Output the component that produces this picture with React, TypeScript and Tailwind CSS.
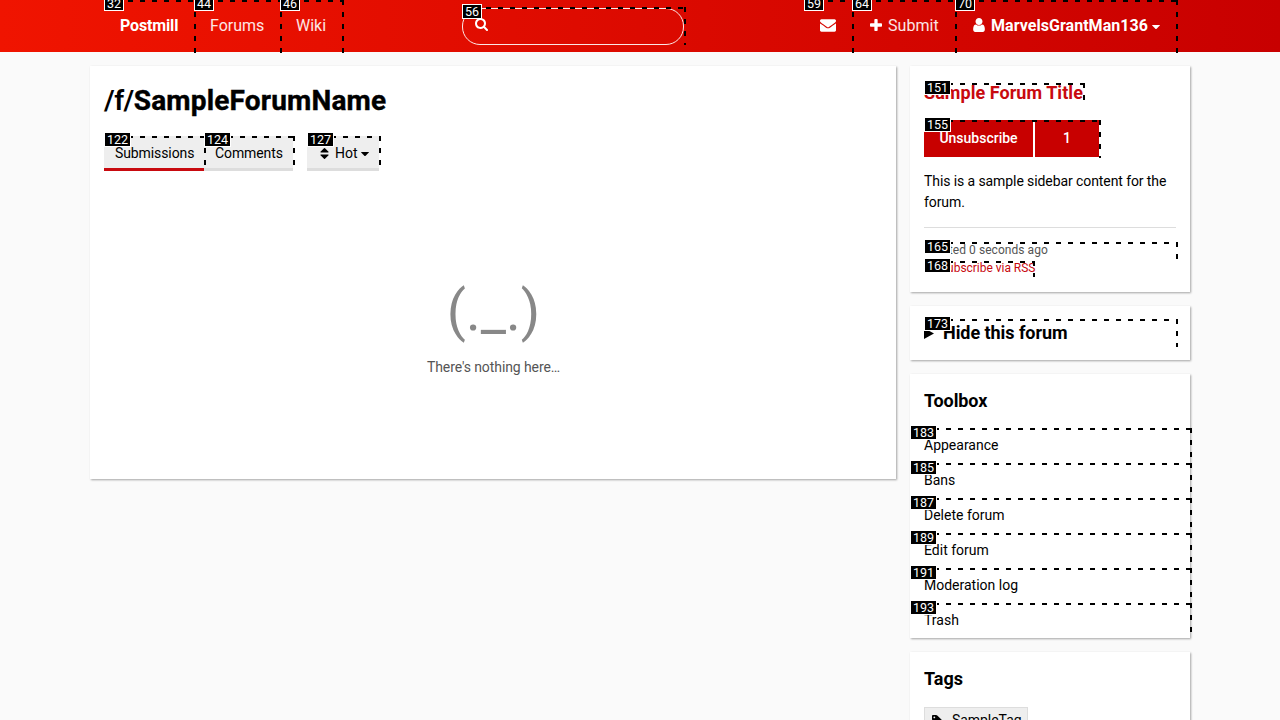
import type { ReactNode } from "react";

type MarkProps = { id: number; edge?: string; lift?: string };

/* Numbered marker with dashed top and right edges, laid over its parent. */
function Mark({ id, edge = "-bottom-px -right-[2px] left-0 top-0", lift = "-top-[3px]" }: MarkProps) {
  return (
    <span className={`pointer-events-none absolute z-10 ${edge}`}>
      <span className="absolute inset-x-0 top-0 h-[2px] bg-[repeating-linear-gradient(90deg,#000_0_5px,transparent_5px_12px)]" />
      <span className="absolute inset-y-0 right-0 w-[2px] bg-[repeating-linear-gradient(180deg,#000_0_5px,transparent_5px_12px)]" />
      <span
        className={`absolute left-0 ${lift} box-border h-[15px] border border-white bg-black px-[2px] text-[12.5px] leading-[14px] font-normal tracking-normal text-white`}
      >
        {id}
      </span>
    </span>
  );
}

function Glyph({ d, box, className }: { d: string; box: string; className: string }) {
  return (
    <svg viewBox={box} className={`shrink-0 ${className}`} fill="currentColor" aria-hidden="true">
      <path d={d} />
    </svg>
  );
}

const SEARCH =
  "M1152 832q0-185-131.5-316.5T704 384 387.5 515.5 256 832t131.5 316.5T704 1280t316.5-131.5T1152 832zm512 832q0 52-38 90t-90 38q-54 0-90-38l-343-342q-179 124-399 124-143 0-273.5-55.5t-225-150-150-225T0 832t55.5-273.5 150-225 225-150T704 128t273.5 55.5 225 150 150 225T1408 832q0 220-124 399l343 343q37 37 37 90z";
const PLUS =
  "M1408 800v192q0 40-28 68t-68 28H896v416q0 40-28 68t-68 28H608q-40 0-68-28t-28-68v-416H96q-40 0-68-28T0 992V800q0-40 28-68t68-28h416V288q0-40 28-68t68-28h192q40 0 68 28t28 68v416h416q40 0 68 28t28 68z";
const USER =
  "M1280 1399q0 109-62.5 187t-150.5 78H213q-88 0-150.5-78T0 1399q0-85 8.5-160.5t31.5-152 58.5-131 94-89T327 832q131 128 313 128t313-128q76 0 134.5 34.5t94 89 58.5 131 31.5 152 8.5 160.5zm-256-887q0 159-112.5 271.5T640 896 368.5 783.5 256 512t112.5-271.5T640 128t271.5 112.5T1024 512z";
const MAIL =
  "M1792 710v794q0 66-47 113t-113 47H160q-66 0-113-47T0 1504V710q44 49 101 87 362 246 497 345 57 42 92.5 65.5t94.5 48 110 24.5h2q51 0 110-24.5t94.5-48T1194 1142q170-123 498-345 57-39 100-87zm0-294q0 79-49 151t-122 123q-376 261-468 325-10 7-42.5 31t-54 38.5-52 32.5-57.5 27-50 9h-2q-23 0-50-9t-57.5-27-52-32.5-54-38.5-42.5-31q-91-64-262-182.5T171 690q-62-42-117-115.5T0 438q0-78 41.5-130T160 256h1472q65 0 112.5 47t47.5 113z";
const TAG =
  "M448 448q0-53-37.5-90.5T320 320t-90.5 37.5T192 448t37.5 90.5T320 576t90.5-37.5T448 448zm1067 576q0 53-37 90l-491 492q-39 37-91 37-53 0-90-37L91 890q-38-37-64.5-101T0 672V256q0-52 38-90t90-38h416q53 0 117 26.5T763 219l715 714q37 39 37 91z";
const CARET = "M0.4 0h7.2q.6.1.2.6L4.4 3.9q-.4.3-.8 0L.2.6Q-.2.1.4 0z";
const SORT = "M0.8 4.6h7.4q.8-.2.4-.8L5 .3q-.5-.4-1 0L.4 3.8q-.4.6.4.8zM.8 6.6h7.4q.8.2.4.8L5 10.9q-.5.4-1 0L.4 7.4q-.4-.6.4-.8z";
const FEED =
  "M3 8.500a1.500 1.500 0 1 1-3 0a1.500 1.500 0 0 1 3 0zM0 3.500v1.500a5 5 0 0 1 5 5h1.500A6.500 6.500 0 0 0 0 3.500zM0 0v1.500A8.500 8.500 0 0 1 8.500 10H10A10 10 0 0 0 0 0z";

function NavItem({ id, className, children }: { id: number; className: string; children: ReactNode }) {
  return (
    <a className={`relative flex h-[52px] items-center pb-[2px] pl-4 whitespace-nowrap ${className}`}>
      {children}
      <Mark id={id} lift="-top-[4px]" />
    </a>
  );
}

function Card({ className = "", children }: { className?: string; children: ReactNode }) {
  return (
    <section className={`bg-white shadow-[1px_1px_2px_rgba(0,0,0,0.35)] ${className}`}>{children}</section>
  );
}

const TOOLS = [
  { id: 183, label: "Appearance" },
  { id: 185, label: "Bans" },
  { id: 187, label: "Delete forum" },
  { id: 189, label: "Edit forum" },
  { id: 191, label: "Moderation log" },
  { id: 193, label: "Trash" },
];

export default function App() {
  return (
    <div className="h-[720px] w-[1280px] overflow-hidden bg-[#fafafa] font-['Roboto',sans-serif] text-[14px] leading-[21px] text-black">
      <header className="h-[52px] bg-[linear-gradient(to_right,#f01400,#c80000)] px-[104px] text-[16px] text-white">
        <nav className="flex h-full">
          <NavItem id={32} className="w-[90px] font-bold tracking-[-0.15px]">Postmill</NavItem>
          <NavItem id={44} className="w-[86px] text-white/90">Forums</NavItem>
          <NavItem id={46} className="w-[62px] text-white/90">Wiki</NavItem>
          <div className="relative mt-2 ml-[120px] flex h-[37px] w-[222px] rounded-[18px] border border-white/90 pt-[9px] pl-[12px]">
            <Glyph d={SEARCH} box="0 128 1664 1664" className="size-[13px]" />
            <Mark id={56} edge="-top-[2px] -left-px -right-[3px] -bottom-px" />
          </div>
          <div className="ml-auto flex">
            <NavItem id={59} className="w-[48px]">
              <Glyph d={MAIL} box="0 256 1792 1408" className="h-[13px] w-4" />
            </NavItem>
            <NavItem id={64} className="w-[103px] tracking-[0.05px] text-white/90">
              <Glyph d={PLUS} box="0 192 1408 1408" className="mr-[6px] ml-[2px] size-[12px] text-white" />
              Submit
            </NavItem>
            <NavItem id={70} className="w-[221px] font-bold tracking-[0.04px]">
              <Glyph d={USER} box="0 128 1280 1536" className="mr-[6px] ml-[2px] h-[14px] w-[12px]" />
              MarvelsGrantMan136
              <Glyph d={CARET} box="0 0 8 4" className="mt-[4px] ml-1 h-1 w-2" />
            </NavItem>
          </div>
        </nav>
      </header>

      <div className="flex items-start gap-[14px] px-[90px] pt-[14px]">
        <Card className="h-[413px] w-[806px] px-[14px] pt-[14px]">
          <h1 className="h-[42px] text-[28px] leading-[42px] font-bold tracking-[0.17px] [-webkit-text-stroke:0.4px_#000]">
            <span className="font-semibold tracking-[-0.5px] [-webkit-text-stroke:0]">/f/</span>SampleForumName
          </h1>
          <div className="mt-[14px] flex">
            <a className="relative h-[35px] w-[100px] border-b-[3px] border-[#c80a0f] bg-[#eee] pt-[7px] pl-[11px] tracking-[-0.1px]">
              Submissions
              <Mark id={122} lift="-top-[4px]" edge="top-0 left-0 -right-[2px] -bottom-[2px]" />
            </a>
            <a className="relative h-[35px] w-[89px] border-b-[3px] border-[#ddd] bg-[#eee] pt-[7px] pl-[11px] tracking-[-0.1px]">
              Comments
              <Mark id={124} lift="-top-[4px]" edge="top-0 left-0 -right-[2px] -bottom-[2px]" />
            </a>
            <a className="relative ml-[14px] flex h-[35px] w-[72px] items-start border-b-[3px] border-[#ddd] bg-[#eee] pt-[7px] pl-[13px]">
              <Glyph d={SORT} box="0 0 9 11.2" className="mt-[5px] mr-[6px] h-[11px] w-[9px]" />
              Hot
              <Glyph d={CARET} box="0 0 8 4" className="mt-[9px] ml-[3px] h-1 w-2" />
              <Mark id={127} lift="-top-[4px]" edge="top-0 left-0 -right-[2px] -bottom-[2px]" />
            </a>
          </div>
          <div className="mt-[98px] flex flex-col items-center">
            <div className="h-[88px] pl-px text-[56px] leading-[84px] text-[#888]">(._.)</div>
            <p className="pl-px tracking-[-0.09px] text-[#555]">There&apos;s nothing here…</p>
          </div>
        </Card>

        <aside className="flex w-[280px] flex-col gap-[14px]">
          <Card className="h-[226px] px-[14px] pt-[13px]">
            <h2 className="flex h-[27px] text-[18px] leading-[27px] font-bold tracking-[0.05px] text-[#c80a0f]">
              <span className="relative">
                Sample Forum Title
                <Mark id={151} edge="top-[4px] left-0 -right-[2px] bottom-[5px]" />
              </span>
            </h2>
            <div className="relative mt-[14px] flex h-[37px] w-[175px] gap-[2px] text-center leading-[36px] font-medium text-white">
              <span className="w-[109px] bg-[#c80000]">Unsubscribe</span>
              <span className="w-[64px] bg-[#c80000]">1</span>
              <Mark id={155} />
            </div>
            <p className="mt-[14px] h-[57px] border-b border-[#ddd] tracking-[-0.09px]">
              This is a sample sidebar content for the forum.
            </p>
            <div className="mt-[13px] text-[12px] leading-[18px]">
              <p className="relative tracking-[0.05px] text-[#555]">
                Created 0 seconds ago
                <Mark id={165} edge="top-[1px] left-0 -right-[2px] -bottom-px" />
              </p>
              <p className="flex text-[#c80a0f]">
                <span className="relative flex items-center tracking-[-0.03px]">
                  <Glyph d={FEED} box="0 0 10 10" className="mr-[6px] mb-[5px] ml-[2px] size-[8px]" />
                  Subscribe via RSS
                  <Mark id={168} edge="top-[2px] left-0 right-0 bottom-0" />
                </span>
              </p>
            </div>
          </Card>

          <Card className="h-[54px] px-[14px] pt-[13px]">
            <h2 className="relative flex h-[27px] items-center text-[18px] leading-[27px] font-bold tracking-[-0.05px]">
              <Glyph d="M0 0L10 5.5L0 11z" box="0 0 10 11" className="mt-px mr-[9px] h-[11px] w-[10px]" />
              Hide this forum
              <Mark id={173} />
            </h2>
          </Card>

          <Card className="h-[264px] pt-[13px]">
            <h2 className="px-[14px] text-[18px] leading-[27px] font-bold tracking-[-0.1px]">Toolbox</h2>
            <ul className="mt-[14px]">
              {TOOLS.map((tool) => (
                <li key={tool.id} className="relative h-[35px] px-[14px] pt-[7px]">
                  {tool.label}
                  <Mark id={tool.id} />
                </li>
              ))}
            </ul>
          </Card>

          <Card className="h-[120px] px-[14px] pt-[13px]">
            <h2 className="text-[18px] leading-[27px] font-bold">Tags</h2>
            <div className="mt-[15px] flex h-[27px] w-[104px] items-center border border-[#ddd] bg-[#eee] pl-[7px] tracking-[-0.05px]">
              <Glyph d={TAG} box="0 128 1515 1515" className="mr-[9px] size-[11px]" />
              SampleTag
            </div>
          </Card>
        </aside>
      </div>
    </div>
  );
}
